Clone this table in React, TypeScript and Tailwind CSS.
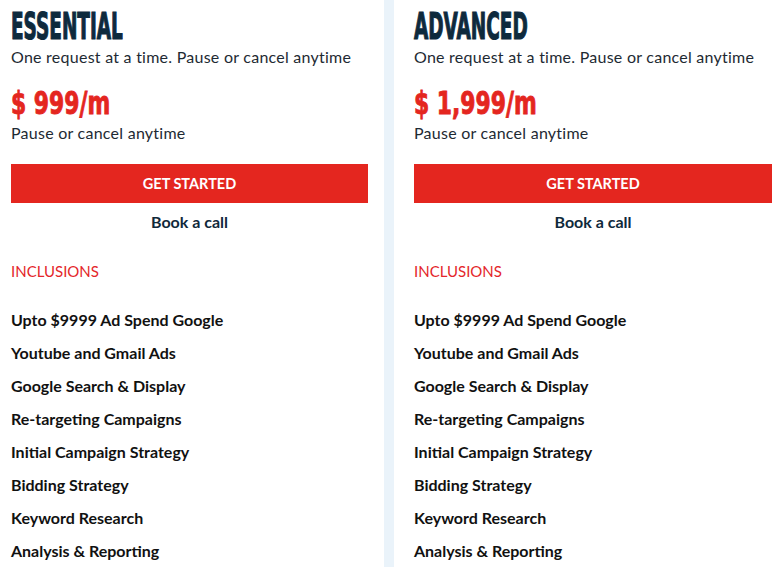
import React from "react";

const items = [
  "Upto $9999 Ad Spend Google",
  "Youtube and Gmail Ads",
  "Google Search & Display",
  "Re-targeting Campaigns",
  "Initial Campaign Strategy",
  "Bidding Strategy",
  "Keyword Research",
  "Analysis & Reporting",
];

const body = "font-['Lato','Noto_Sans',sans-serif]";
const display = "font-['DejaVu_Sans_Condensed','DejaVu_Sans',sans-serif]";

function Card({
  title,
  price,
  className,
}: {
  title: string;
  price: string;
  className: string;
}) {
  return (
    <div className={`bg-white flex flex-col ${className}`}>
      <div className="pt-[7px]">
        <div
          className={`${display} scale-x-[0.54] origin-left font-bold text-[38px] leading-none h-[38px] whitespace-nowrap text-[#0e2a3d] [-webkit-text-stroke:1.2px_#0e2a3d]`}
        >
          {title}
        </div>
      </div>
      <p className={`${body} text-[16px] leading-6 tracking-[0.25px] text-[#1e2a33]`}>
        One request at a time. Pause or cancel anytime
      </p>
      <div
        className={`${display} scale-x-[0.81] scale-y-[1.06] origin-left mt-[19px] font-bold text-[30px] leading-none h-[30px] whitespace-nowrap text-[#e4261f] [-webkit-text-stroke:0.8px_#e4261f]`}
      >
        {price}
      </div>
      <p className={`${body} mt-[3px] text-[16px] leading-6 tracking-[0.25px] text-[#1e2a33]`}>
        Pause or cancel anytime
      </p>
      <button
        className={`${body} mt-[19px] h-[39px] w-full bg-[#e4261f] text-white font-bold text-[14.5px] flex items-center justify-center`}
      >
        GET STARTED
      </button>
      <p
        className={`${body} mt-[7px] text-center font-bold text-[16px] leading-6 text-[#10293b]`}
      >
        Book a call
      </p>
      <p className={`${body} mt-[25px] text-[15px] leading-6 text-[#e4262a]`}>
        INCLUSIONS
      </p>
      <ul className="mt-[20px] flex flex-col">
        {items.map((t) => (
          <li
            key={t}
            className={`${body} font-bold text-[16px] leading-[33px] text-[#111111] whitespace-nowrap`}
          >
            {t}
          </li>
        ))}
      </ul>
    </div>
  );
}

export default function App() {
  return (
    <div className="w-[781px] h-[567px] overflow-hidden flex bg-[#eaf3fa]">
      <Card
        title="ESSENTIAL"
        price="$ 999/m"
        className="w-[384px] pl-[11px] pr-[16px]"
      />
      <div className="w-[10px] shrink-0" />
      <Card
        title="ADVANCED"
        price="$ 1,999/m"
        className="w-[387px] pl-[20px] pr-[9px]"
      />
    </div>
  );
}
